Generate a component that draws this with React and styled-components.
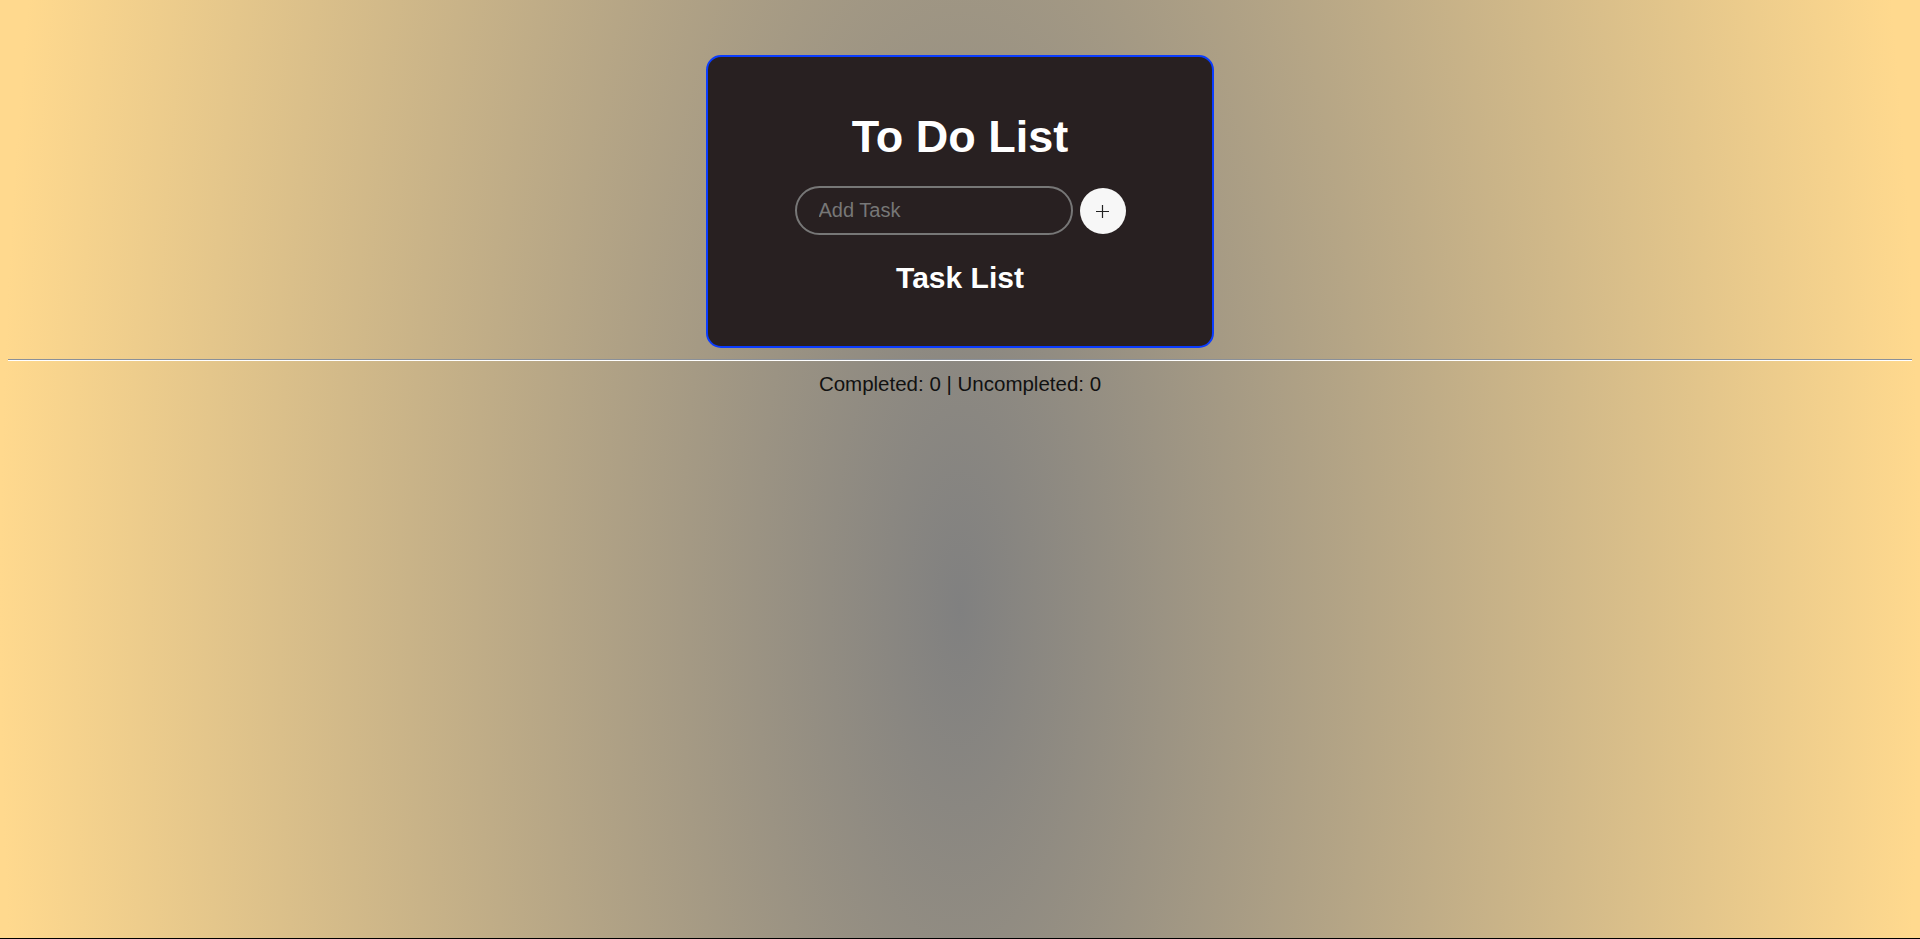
import React, { useState } from "react";
import styled, { createGlobalStyle } from "styled-components";

const GlobalStyle = createGlobalStyle`
  html {
    background: #000;
  }
  body {
    margin: 0;
    font-family: "Liberation Sans", Arial, sans-serif;
  }
`;

const Page = styled.div`
  box-sizing: border-box;
  min-height: calc(100vh - 1px);
  padding: 8px;
  background: radial-gradient(
    ellipse 960px 2540px at 50% 609px,
    #808080,
    #ffd98e
  );
`;

const Header = styled.div`
  display: flex;
  justify-content: center;
  padding-top: 47px;
`;

const Card = styled.div`
  box-sizing: border-box;
  width: 508px;
  height: 293px;
  padding: 54px 20px 0;
  display: flex;
  flex-direction: column;
  align-items: center;
  background-color: #282021;
  border: 2px solid #0a3cff;
  border-radius: 15px;
`;

const Title = styled.h1`
  margin: 0;
  font-size: 45px;
  font-weight: 700;
  color: #fff;
`;

const AddRow = styled.div`
  display: flex;
  align-items: center;
  gap: 7px;
  margin-top: 23px;
`;

const TaskInput = styled.input`
  box-sizing: border-box;
  width: 278px;
  height: 49px;
  padding: 0 22px;
  background: transparent;
  border: 2px solid #777;
  border-radius: 25px;
  color: #fff;
  font-family: inherit;
  font-size: 20px;
  outline: none;
  &::placeholder {
    color: #777;
  }
`;

const AddButton = styled.button`
  display: flex;
  align-items: center;
  justify-content: center;
  width: 46px;
  height: 46px;
  padding: 2px 0 0;
  border: none;
  border-radius: 50%;
  background-color: #f7f7f7;
  color: #222;
  cursor: pointer;
`;

const SubTitle = styled.h2`
  margin: 26px 0 0;
  font-size: 30px;
  font-weight: 700;
  color: #fff;
`;

const Divider = styled.hr`
  height: 0;
  margin: 11px 0 0;
  border: none;
  border-top: 1px solid #8a9099;
  border-bottom: 1px solid #fff;
`;

const Stats = styled.p`
  margin: 11px 0 0;
  text-align: center;
  font-size: 20.5px;
  color: #111;
`;

const PlusIcon = () => (
  <svg width="13" height="13" viewBox="0 0 13 13" aria-hidden="true">
    <path d="M6.5 0v13M0 6.5h13" stroke="currentColor" strokeWidth="1.2" />
  </svg>
);

export default function App() {
  const [task, setTask] = useState("");
  const [tasks, setTasks] = useState([]);

  const addTask = () => {
    if (task.trim()) {
      setTasks([...tasks, { text: task, done: false }]);
      setTask("");
    }
  };

  const completed = tasks.filter((t) => t.done).length;

  return (
    <Page>
      <GlobalStyle />
      <Header>
        <Card>
          <Title>To Do List</Title>
          <AddRow>
            <TaskInput
              placeholder="Add Task"
              value={task}
              onChange={(e) => setTask(e.target.value)}
            />
            <AddButton onClick={addTask} aria-label="Add">
              <PlusIcon />
            </AddButton>
          </AddRow>
          <SubTitle>Task List</SubTitle>
        </Card>
      </Header>
      <Divider />
      <Stats>
        Completed: {completed} | Uncompleted: {tasks.length - completed}
      </Stats>
    </Page>
  );
}
